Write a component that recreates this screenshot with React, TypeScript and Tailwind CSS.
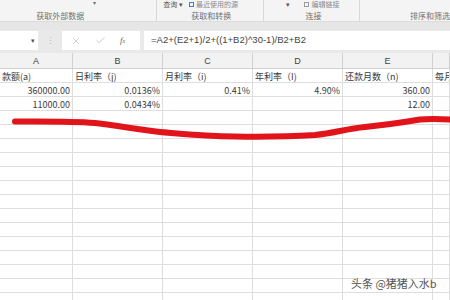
import { X, Check } from 'lucide-react';

const cjk = "'Noto Sans CJK SC', 'Liberation Sans', sans-serif";

const cols = ['A', 'B', 'C', 'D', 'E', ''];

const rows: string[][] = [
  ['款额(a)', '日利率（j)', '月利率（i)', '年利率（I)', '还款月数（n)', '每月'],
  ['360000.00', '0.0136%', '0.41%', '4.90%', '360.00', ''],
  ['11000.00', '0.0434%', '', '', '12.00', ''],
];

function Cell({ text }: { text: string }) {
  const isNum = /^[0-9.%]+$/.test(text);
  return (
    <div
      className={`h-[14px] border-r border-b border-[#dedede] px-[2px] pt-[1px] overflow-hidden whitespace-nowrap text-[9px] leading-[14px] text-[#3a3a3a] ${
        isNum ? 'text-right' : 'text-left'
      }`}
    >
      {text}
    </div>
  );
}

export default function App() {
  const empty = Array.from({ length: 14 }, () => ['', '', '', '', '', '']);
  const all = [...rows, ...empty];

  return (
    <div className="relative w-[450px] h-[300px] overflow-hidden bg-white" style={{ fontFamily: cjk }}>
      {/* ribbon */}
      <div className="h-[22px] bg-[#f4f4f4] flex border-b border-[#dcdcdc] text-[#707070]">
        <div className="w-[163px] border-r border-[#d8d8d8] relative flex flex-col items-center">
          <span className="absolute left-[93px] top-0 text-[6px] leading-[6px]">▾</span>
          <div className="mt-[11px] ml-[-36px] text-[8px] leading-[10px]">获取外部数据</div>
        </div>
        <div className="w-[111px] border-r border-[#d8d8d8] flex flex-col">
          <div className="flex items-center h-[8px] text-[7px] leading-[8px] text-[#555]">
            <span className="ml-[6px]">查询 ▾</span>
            <span className="ml-[6px] w-[5px] h-[5px] border border-[#3b7dd8]" />
            <span className="ml-[2px] text-[#8a8a8a]">最近使用的源</span>
          </div>
          <div className="mt-[3px] ml-[34px] text-[8px] leading-[10px]">获取和转换</div>
        </div>
        <div className="w-[99px] border-r border-[#d8d8d8] flex flex-col">
          <div className="flex items-center h-[8px] text-[7px] leading-[8px] text-[#8a8a8a]">
            <span className="ml-[22px] text-[#555]">▾</span>
            <span className="ml-[14px] w-[5px] h-[5px] border border-[#9a9a9a]" />
            <span className="ml-[2px]">编辑链接</span>
          </div>
          <div className="mt-[3px] ml-[41px] text-[8px] leading-[10px]">连接</div>
        </div>
        <div className="flex-1 flex flex-col">
          <div className="mt-[11px] ml-[50px] text-[8px] leading-[10px] whitespace-nowrap">排序和筛选</div>
        </div>
      </div>

      {/* gap */}
      <div className="h-[8px] bg-[#e6e6e6]" />

      {/* formula bar */}
      <div className="h-[21px] bg-[#e9e9e9] flex items-stretch py-[1px]">
        <div className="w-[38px] bg-white relative">
          <span className="absolute right-[3px] top-[4px] text-[7px] text-[#555]">▾</span>
        </div>
        <div className="w-[24px] flex items-center justify-center text-[#b9b9b9] text-[9px] leading-none">⋮</div>
        <div className="w-[78px] bg-white flex items-center text-[#b5b5b5]">
          <X size={10} strokeWidth={1.5} className="ml-[9px]" />
          <Check size={11} strokeWidth={1.5} className="ml-[14px]" />
          <span className="ml-[14px] text-[9px] italic text-[#666]" style={{ fontFamily: "'Liberation Serif', serif" }}>
            f<span className="text-[6px]">x</span>
          </span>
        </div>
        <div className="w-[4px]" />
        <div
          className="flex-1 bg-white flex items-center pl-[7px] text-[9.5px] text-[#444]"
          style={{ fontFamily: "'Liberation Sans', sans-serif" }}
        >
          =A2+(E2+1)/2+((1+B2)^30-1)/B2+B2
        </div>
      </div>

      {/* gap */}
      <div className="h-[2px] bg-[#e9e9e9]" />

      {/* sheet */}
      <div className="grid grid-cols-[73px_90px_90px_90px_90px_1fr]">
        {cols.map((c, i) => (
          <div
            key={i}
            className="h-[16px] pt-[2px] bg-[#f2f2f2] border-r border-b border-[#d0d0d0] flex items-center justify-center text-[9px] text-[#444]"
            style={{ fontFamily: "'Liberation Sans', sans-serif" }}
          >
            {c}
          </div>
        ))}
        {all.map((r, ri) => r.map((t, ci) => <Cell key={`${ri}-${ci}`} text={t} />))}
      </div>

      {/* red marker stroke */}
      <svg className="absolute left-0 top-0 pointer-events-none" width="450" height="300">
        <path
          d="M15 121.5 C 40 121.5, 70 121, 95 123 C 120 126, 140 130, 160 132 C 185 134, 205 136, 235 136.5 C 265 137, 290 136.5, 315 135 C 335 133, 345 129, 365 127 C 385 125, 405 122, 420 119.5 C 430 118.5, 440 119, 452 119.5"
          fill="none"
          stroke="#e0141a"
          strokeWidth="6"
          strokeLinecap="round"
        />
      </svg>

      {/* watermark */}
      <div
        className="absolute left-[351px] top-[275px] text-[11px] text-[#555] whitespace-nowrap"
        style={{ textShadow: '0 0 2px #fff, 0 0 2px #fff' }}
      >
        头条 @猪猪入水b
      </div>
    </div>
  );
}
